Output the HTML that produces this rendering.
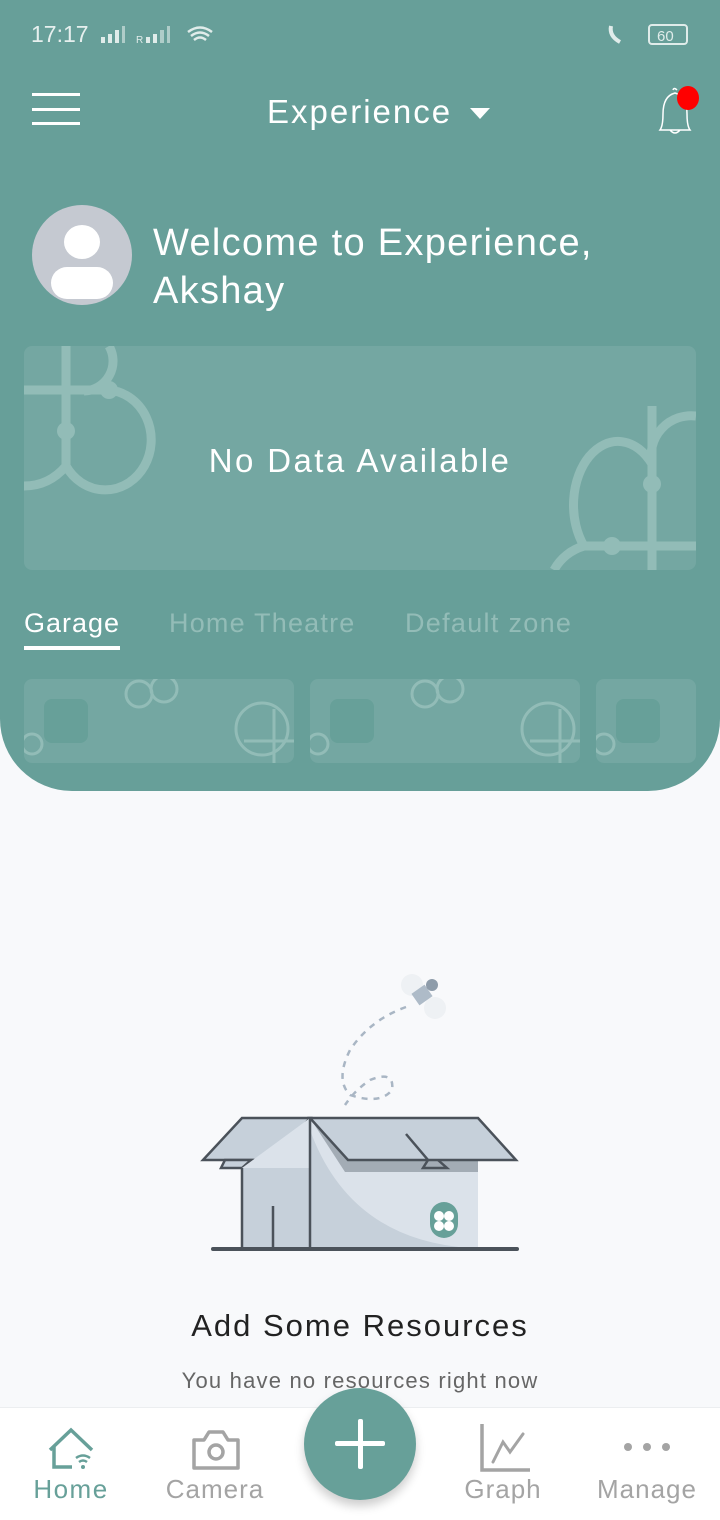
<!DOCTYPE html>
<html><head><meta charset="utf-8"><style>
*{margin:0;padding:0;box-sizing:border-box}
body{width:720px;height:1520px;background:#f8f9fb;font-family:"Liberation Sans",sans-serif;position:relative;overflow:hidden}
.hdr{position:absolute;left:0;top:0;width:720px;height:791px;background:#679f99;border-radius:0 0 72px 72px}
.abs{position:absolute}
.t{color:#fff;white-space:nowrap}
.card{position:absolute;background:#74a7a2;border-radius:8px;overflow:hidden}
.sq{position:absolute;width:44px;height:44px;background:#67a099;border-radius:8px;left:20px;top:20px}
</style></head><body>
<div class="hdr"></div>
<div class="abs t" style="left:31px;top:21px;font-size:23px;color:#e6efee">17:17</div>
<svg class="abs" style="left:100px;top:24px" width="120" height="22"><g fill="#e0ecea"><rect x="1" y="13" width="4" height="6"/><rect x="8" y="10" width="4" height="9"/><rect x="15" y="6" width="4" height="13"/><rect x="22" y="2" width="3" height="17" opacity=".6"/><text x="36" y="19" font-size="10" font-family="Liberation Sans">R</text><rect x="46" y="13" width="4" height="6"/><rect x="53" y="10" width="4" height="9"/><rect x="60" y="6" width="4" height="13" opacity=".6"/><rect x="67" y="2" width="3" height="17" opacity=".6"/></g><path d="M88 8 Q100 -1 112 8 M91 12 Q100 5 109 12 M94 16 Q100 11 106 16" stroke="#e0ecea" stroke-width="2.5" fill="none"/></svg>
<svg class="abs" style="left:606px;top:22px" width="86" height="26"><path d="M5 4 Q3 14 14 20" stroke="#e0ecea" stroke-width="4" fill="none"/><rect x="43" y="3" width="38" height="19" rx="3" fill="none" stroke="#e0ecea" stroke-width="2"/><text x="51" y="19" font-size="15" fill="#e0ecea" font-family="Liberation Sans">60</text></svg>
<div class="abs" style="left:32px;top:93px;width:48px;height:3px;background:#fff;box-shadow:0 15px 0 #fff,0 29px 0 #fff"></div>
<div class="abs t" style="left:267px;top:93px;font-size:33px;letter-spacing:2px">Experience</div>
<div class="abs" style="left:470px;top:108px;border-left:10px solid transparent;border-right:10px solid transparent;border-top:11px solid #fff"></div>
<svg class="abs" style="left:655px;top:84px" width="50" height="50"><path d="M18 6 Q19 3 22 6 M5 46 Q8 42 8 30 Q8 12 20 9 Q32 12 32 30 Q32 42 35 46 Z M15 46 Q20 52 25 46" stroke="#fff" stroke-width="1.5" fill="none"/><ellipse cx="33" cy="14" rx="11" ry="12" fill="#f00"/></svg>
<div class="abs" style="left:32px;top:205px;width:100px;height:100px;border-radius:50%;background:#c5c9d1;overflow:hidden"><div class="abs" style="left:32px;top:20px;width:36px;height:34px;background:#fff;border-radius:50%"></div><div class="abs" style="left:19px;top:62px;width:62px;height:32px;background:#fff;border-radius:16px"></div></div>
<div class="abs t" style="left:153px;top:222px;font-size:38px;letter-spacing:1.3px">Welcome to Experience,</div>
<div class="abs t" style="left:153px;top:270px;font-size:38px;letter-spacing:1.3px">Akshay</div>
<div class="card" style="left:24px;top:346px;width:672px;height:224px">
<svg class="abs" style="left:0;top:0" width="672" height="224"><g stroke="#92bcb7" stroke-width="9" fill="none"><path d="M42 0 V120 M0 44 H85 M85 0 A30 30 0 0 1 60 45"/><path d="M85 44 A46 50 0 1 1 42 120 M42 120 Q25 140 0 140"/><path d="M628 224 V60 M560 200 H672 M628 118 A42 60 0 1 0 560 200 A50 50 0 0 0 530 224 M628 118 A40 40 0 0 1 672 70"/></g><g fill="#92bcb7"><circle cx="42" cy="85" r="9"/><circle cx="85" cy="44" r="9"/><circle cx="628" cy="138" r="9"/><circle cx="588" cy="200" r="9"/></g></svg>
<div class="abs t" style="left:0;width:672px;text-align:center;top:96px;font-size:33px;letter-spacing:2.4px">No Data Available</div></div>
<div class="abs t" style="left:24px;top:608px;font-size:27px;letter-spacing:1px">Garage</div>
<div class="abs" style="left:24px;top:646px;width:96px;height:4px;background:#fff"></div>
<div class="abs t" style="left:169px;top:608px;font-size:27px;color:#93bcb7;letter-spacing:1.2px">Home Theatre</div>
<div class="abs t" style="left:405px;top:608px;font-size:27px;color:#93bcb7;letter-spacing:1.3px">Default zone</div>
<div class="card" style="left:24px;top:679px;width:270px;height:84px"><div class="sq"></div><svg class="abs" style="left:0;top:0" width="270" height="84"><g stroke="#92bcb7" stroke-width="3" fill="none"><circle cx="115" cy="15" r="13"/><circle cx="140" cy="10" r="13"/><circle cx="238" cy="50" r="26"/><path d="M250 30 V84 M220 62 H270"/><circle cx="8" cy="65" r="10"/></g></svg></div>
<div class="card" style="left:310px;top:679px;width:270px;height:84px"><div class="sq"></div><svg class="abs" style="left:0;top:0" width="270" height="84"><g stroke="#92bcb7" stroke-width="3" fill="none"><circle cx="115" cy="15" r="13"/><circle cx="140" cy="10" r="13"/><circle cx="238" cy="50" r="26"/><path d="M250 30 V84 M220 62 H270"/><circle cx="8" cy="65" r="10"/></g></svg></div>
<div class="card" style="left:596px;top:679px;width:100px;height:84px"><div class="sq"></div><svg class="abs" width="40" height="84"><circle cx="8" cy="65" r="10" stroke="#92bcb7" stroke-width="3" fill="none"/></svg></div>
<svg class="abs" style="left:180px;top:960px" width="360" height="300">
<circle cx="232" cy="25" r="11" fill="#eef1f4"/><circle cx="255" cy="48" r="11" fill="#eef1f4"/>
<rect x="234" y="28" width="16" height="14" fill="#aebbc8" transform="rotate(-35 242 35)"/>
<circle cx="252" cy="25" r="6" fill="#8e9caa"/>
<path d="M226 47 Q190 60 170 90 Q155 120 170 135 Q200 145 212 130 Q215 110 190 120 Q175 130 165 145" stroke="#a9b6c4" stroke-width="2.5" stroke-dasharray="6 6" fill="none"/>
<path d="M23 200 L62 158 L130 158 L93 200 Z" fill="#c6d0da" stroke="#4b525a" stroke-width="2.5"/>
<path d="M41 208 L45 200 L71 200 L62 208 Z" fill="#c6d0da" stroke="#4b525a" stroke-width="2.5"/>
<path d="M62 208 V288 H298 V208 L130 158 Z" fill="#dbe2ea"/>
<path d="M62 208 H130 V288 H62 Z" fill="#c6d0da"/>
<path d="M130 170 Q170 280 290 288 H130 Z" fill="#c6d0da"/>
<path d="M130 158 L165 212 H298 V200 Z" fill="#a3acb5"/>
<path d="M62 208 V288 M93 246 V288 M130 158 V288" stroke="#4b525a" stroke-width="2.5"/>
<path d="M130 158 L168 200 H336 L298 158 Z" fill="#c6d0da" stroke="#4b525a" stroke-width="2.5"/>
<path d="M226 174 L248 200 L243 208 L267 208 L258 200" fill="none" stroke="#4b525a" stroke-width="2.5"/>
<rect x="250" y="242" width="28" height="36" rx="14" fill="#67a099"/><circle cx="259" cy="256" r="5" fill="#fff"/><circle cx="269" cy="256" r="5" fill="#fff"/><circle cx="259" cy="266" r="5" fill="#fff"/><circle cx="269" cy="266" r="5" fill="#fff"/>
<path d="M33 289 H337" stroke="#4b525a" stroke-width="4" stroke-linecap="round"/>
</svg>
<div class="abs" style="left:0;width:720px;text-align:center;top:1308px;font-size:31px;color:#222;letter-spacing:2px">Add Some Resources</div>
<div class="abs" style="left:0;width:720px;text-align:center;top:1368px;font-size:22px;color:#666;letter-spacing:1.2px">You have no resources right now</div>
<div class="abs" style="left:0;top:1407px;width:720px;height:113px;background:#fff;border-top:1px solid #eceef0"></div>
<svg class="abs" style="left:46px;top:1424px" width="54" height="50"><path d="M4 26 L25 6 L46 26 M8 22 V43 H26" stroke="#67a099" stroke-width="3.5" fill="none"/><path d="M30 34 Q37 29 44 34 M33 38 Q37 35 41 38" stroke="#67a099" stroke-width="2.5" fill="none"/><circle cx="37" cy="43" r="2" fill="#67a099"/></svg>
<div class="abs" style="left:0;width:142px;text-align:center;top:1474px;font-size:26px;color:#67a099;letter-spacing:1.5px">Home</div>
<svg class="abs" style="left:190px;top:1428px" width="52" height="44"><path d="M4 12 H14 L19 4 H33 L38 12 H48 V40 H4 Z" stroke="#a4a4a4" stroke-width="3.5" fill="none" stroke-linejoin="round"/><circle cx="26" cy="24" r="7" stroke="#a4a4a4" stroke-width="3.5" fill="none"/></svg>
<div class="abs" style="left:144px;width:142px;text-align:center;top:1474px;font-size:26px;color:#a4a4a4;letter-spacing:1px">Camera</div>
<div class="abs" style="left:304px;top:1388px;width:112px;height:112px;border-radius:50%;background:#67a099;box-shadow:0 6px 10px rgba(0,0,0,.2)"></div>
<div class="abs" style="left:335px;top:1441px;width:50px;height:5px;background:#fff;border-radius:2px"></div>
<div class="abs" style="left:358px;top:1419px;width:5px;height:50px;background:#fff;border-radius:2px"></div>
<svg class="abs" style="left:478px;top:1422px" width="56" height="52"><path d="M4 2 V48 H52" stroke="#a4a4a4" stroke-width="3.5" fill="none"/><path d="M15 40 L25 20 L32 30 L45 12" stroke="#a4a4a4" stroke-width="3" fill="none" stroke-linecap="round"/></svg>
<div class="abs" style="left:432px;width:142px;text-align:center;top:1474px;font-size:26px;color:#a4a4a4;letter-spacing:1px">Graph</div>
<div class="abs" style="left:624px;top:1443px;width:8px;height:8px;border-radius:50%;background:#a4a4a4;box-shadow:19px 0 0 #a4a4a4,38px 0 0 #a4a4a4"></div>
<div class="abs" style="left:576px;width:142px;text-align:center;top:1474px;font-size:26px;color:#a4a4a4;letter-spacing:1px">Manage</div>
</body></html>
